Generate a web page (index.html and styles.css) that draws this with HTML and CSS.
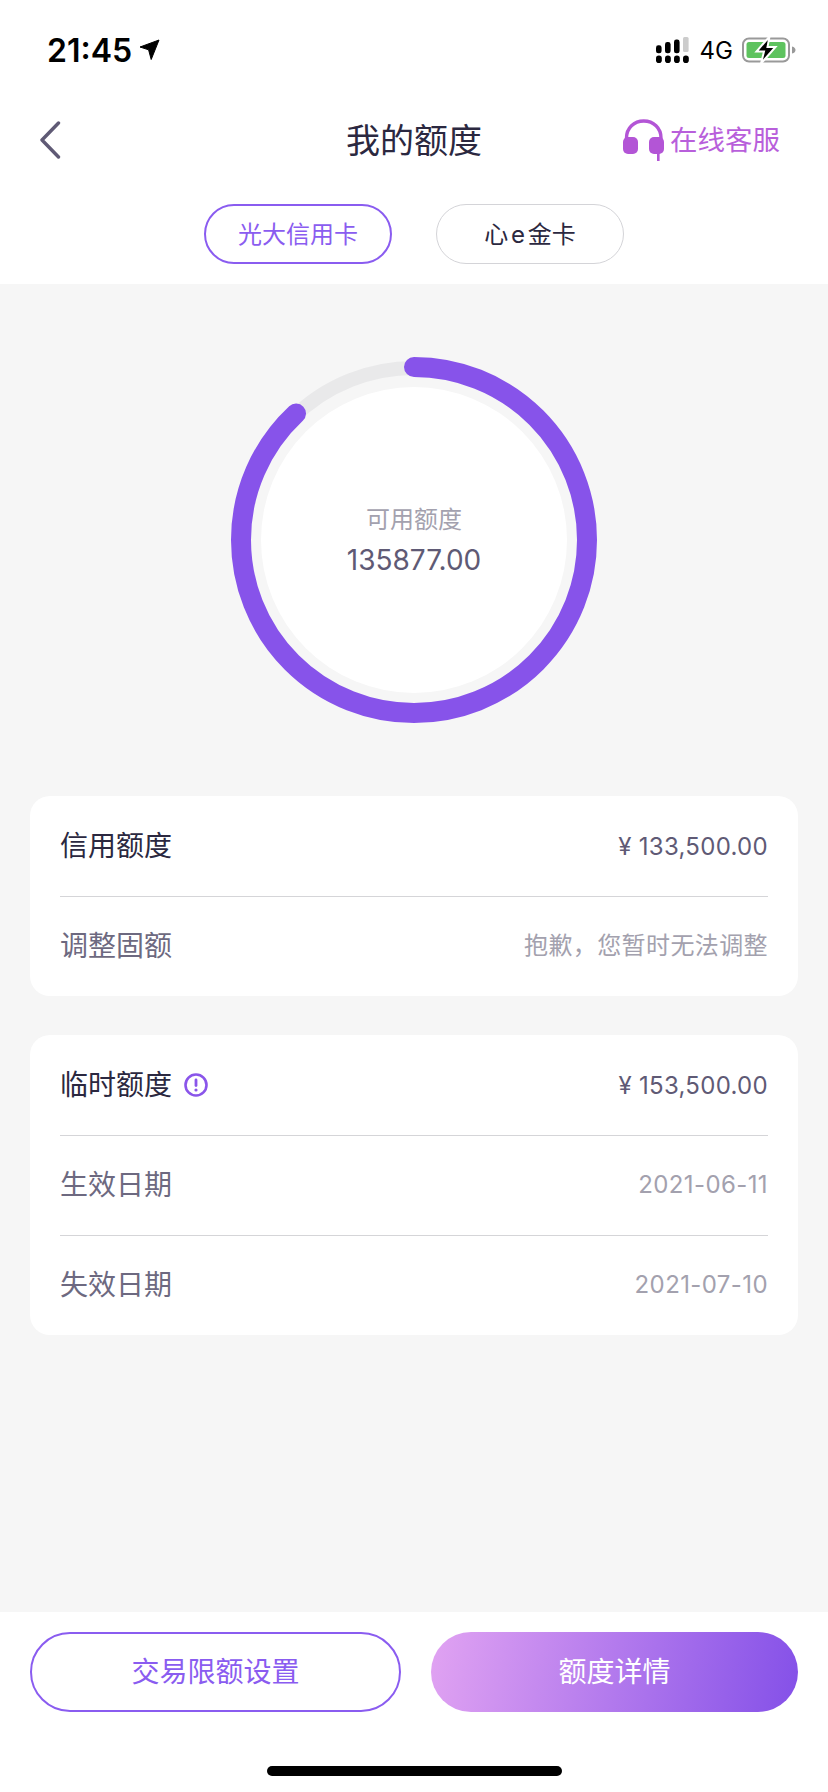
FILE: index.html
```html
<!DOCTYPE html>
<html lang="zh-CN">
<head>
    <meta charset="UTF-8">
    <meta name="viewport" content="width=device-width, initial-scale=1.0">
    <title>我的额度</title>
    <link rel="stylesheet" href="styles.css">
</head>
<body>
<div class="page">
    <div class="status">
        <div class="status-left">
            <span class="time">21:45</span>
            <svg class="arrow" width="21" height="22" viewBox="0 0 21 22"><path d="M1 8 L20 1 L12.2 20.5 L9.6 10.8 Z" fill="#000" stroke="#000" stroke-width="1" stroke-linejoin="round"/></svg>
        </div>
        <div class="status-right">
            <svg class="signal" width="33" height="26" viewBox="0 0 33 26">
                <rect x="0" y="8.3" width="5.6" height="8" rx="2.4" fill="#000"/>
                <rect x="9" y="5" width="5.6" height="11.3" rx="2.4" fill="#000"/>
                <rect x="18" y="2.5" width="5.6" height="13.8" rx="2.4" fill="#000"/>
                <rect x="27" y="0" width="5.6" height="15" rx="1.5" fill="#ccc"/>
                <rect x="0" y="18.6" width="5.8" height="7.4" rx="2.8" fill="#000"/>
                <rect x="9" y="18.6" width="5.8" height="7.4" rx="2.8" fill="#000"/>
                <rect x="18" y="18.6" width="5.8" height="7.4" rx="2.8" fill="#000"/>
                <rect x="27" y="18.6" width="5.8" height="7.4" rx="2.8" fill="#000"/>
            </svg>
            <span class="net">4G</span>
            <svg class="battery" width="54" height="28" viewBox="0 0 54 28">
                <rect x="1" y="2.5" width="46" height="23" rx="6" fill="none" stroke="#999" stroke-width="2"/>
                <rect x="4.5" y="6" width="39" height="16" rx="2.5" fill="#5ec35f"/>
                <path d="M50 10.5 C52.5 11 53.5 12.5 53.5 14 C53.5 15.5 52.5 17 50 17.5 Z" fill="#999"/>
                <path d="M27.5 0.5 L14.5 15.5 L22 15.5 L19 27.5 L33.5 11 L25.5 11 Z" fill="#000" stroke="#fff" stroke-width="2"/>
            </svg>
        </div>
    </div>

    <div class="nav">
        <svg class="back" width="22" height="38" viewBox="0 0 22 38"><path d="M19.5 2 L3 19 L19.5 36" fill="none" stroke="#5f5a75" stroke-width="3.4" stroke-linecap="round" stroke-linejoin="round"/></svg>
        <div class="title">我的额度</div>
        <div class="service">
            <svg class="headset" width="44" height="42" viewBox="0 0 44 42">
                <path d="M4.5 22 V19 C4.5 9 12 2 21.75 2 C31.5 2 39 9 39 19 V22" fill="none" stroke="#b355d6" stroke-width="3.4"/>
                <rect x="1" y="18" width="15" height="17" rx="5" fill="#b355d6"/>
                <rect x="27" y="18" width="15" height="17" rx="5" fill="#b355d6"/>
                <rect x="35" y="33" width="2.6" height="9" fill="#b355d6"/>
            </svg>
            <span class="service-text">在线客服</span>
        </div>
    </div>

    <div class="tabs">
        <div class="tab tab-active">光大信用卡</div>
        <div class="tab tab-tight">心 e 金卡</div>
    </div>

    <div class="main">
        <div class="ring-wrap">
            <svg class="ring" width="366" height="366" viewBox="0 0 366 366">
                <circle cx="183" cy="183" r="172" fill="none" stroke="#e9e9ea" stroke-width="14"/>
                <circle cx="183" cy="183" r="153" fill="#fff"/>
                <circle class="ring-bar" cx="183" cy="183" r="173" fill="none" stroke="#8753ea" stroke-width="20" stroke-linecap="round" pathLength="360" stroke-dasharray="317 360" transform="rotate(-90 183 183)"/>
            </svg>
            <div class="ring-text">
                <div class="ring-label">可用额度</div>
                <div class="ring-value">135877.00</div>
            </div>
        </div>

        <div class="card">
            <div class="row">
                <div class="label label-main">信用额度</div>
                <div class="value">¥ 133,500.00</div>
            </div>
            <div class="row">
                <div class="label">调整固额</div>
                <div class="value value-muted value-cn">抱歉，您暂时无法调整</div>
            </div>
        </div>

        <div class="card">
            <div class="row">
                <div class="label label-main">临时额度
                    <svg class="info" width="24" height="24" viewBox="0 0 24 24">
                        <circle cx="12" cy="12" r="10.5" fill="none" stroke="#8a55ea" stroke-width="2.6"/>
                        <rect x="10.6" y="5.6" width="2.8" height="8.4" rx="1.4" fill="#8a55ea"/>
                        <circle cx="12" cy="17" r="1.6" fill="#8a55ea"/>
                    </svg>
                </div>
                <div class="value">¥ 153,500.00</div>
            </div>
            <div class="row">
                <div class="label">生效日期</div>
                <div class="value value-muted">2021-06-11</div>
            </div>
            <div class="row">
                <div class="label">失效日期</div>
                <div class="value value-muted">2021-07-10</div>
            </div>
        </div>
    </div>

    <div class="footer">
        <div class="buttons">
            <div class="btn btn-line">交易限额设置</div>
            <div class="btn btn-fill">额度详情</div>
        </div>
        <div class="home-bar"></div>
    </div>
</div>
</body>
</html>
```

FILE: styles.css
```css
* {
    box-sizing: border-box;
}
body {
    margin: 0;
    background-color: #fff;
    font-family: Inter, "Noto Sans CJK SC", sans-serif;
}
.page {
    width: 828px;
    height: 1792px;
    display: flex;
    flex-direction: column;
    overflow: hidden;
}
.status {
    height: 98px;
    padding: 2px 32px 0 47px;
    display: flex;
    align-items: center;
    justify-content: space-between;
}
.status-left {
    display: flex;
    align-items: center;
    gap: 7px;
}
.time {
    font-size: 32px;
    font-weight: 600;
    color: #000;
}
.status-right {
    display: flex;
    align-items: center;
}
.net {
    font-size: 24px;
    margin: 0 9px 0 11px;
    color: #000;
}
.nav {
    height: 84px;
    padding: 0 48px 0 39px;
    display: flex;
    align-items: center;
    justify-content: space-between;
    position: relative;
}
.title {
    position: absolute;
    left: 0;
    right: 0;
    padding-bottom: 4px;
    text-align: center;
    font-size: 34px;
    color: #2b2840;
}
.service {
    display: flex;
    align-items: center;
    gap: 4px;
    font-size: 27.5px;
    color: #b85fdb;
}
.service-text {
    padding-bottom: 4px;
}
.tabs {
    margin: 22px 0 20px;
    display: flex;
    justify-content: center;
    gap: 44px;
}
.tab {
    width: 188px;
    height: 60px;
    padding-bottom: 3px;
    border: 1px solid #d4d4d8;
    border-radius: 30px;
    display: flex;
    align-items: center;
    justify-content: center;
    font-size: 24px;
    color: #2b2840;
}
.tab-active {
    border: 2px solid #8a5cf0;
    color: #8a5cf0;
}
.tab-tight {
    word-spacing: -4px;
}
.main {
    flex: 1;
    background-color: #f6f6f6;
    padding: 73px 30px 0;
}
.ring-wrap {
    width: 366px;
    height: 366px;
    margin: 0 auto 73px;
    display: grid;
    place-items: center;
}
.ring {
    grid-area: 1 / 1;
}
.ring-text {
    grid-area: 1 / 1;
    padding-top: 3px;
    text-align: center;
}
.ring-label {
    margin-bottom: 1px;
    font-size: 24px;
    line-height: 36px;
    color: #a3a1ae;
}
.ring-value {
    font-size: 28px;
    line-height: 42px;
    color: #5f5a75;
}
.card {
    background-color: #fff;
    border-radius: 20px;
    padding: 0 30px;
    margin-bottom: 39px;
}
.row {
    height: 100px;
    display: flex;
    align-items: center;
    justify-content: space-between;
    border-top: 1px solid #d5d5d8;
}
.row:first-child {
    border-top: 0;
}
.label {
    padding-bottom: 5px;
    display: flex;
    align-items: center;
    gap: 12px;
    font-size: 28px;
    color: #6d6980;
}
.label-main {
    color: #2b2840;
}
.info {
    margin-bottom: -5px;
}
.value {
    font-size: 24px;
    letter-spacing: 0.3px;
    color: #5f5a75;
}
.value-muted {
    padding-bottom: 2px;
    letter-spacing: 0.4px;
    color: #a3a1ae;
}
.value-cn {
    padding-bottom: 6px;
}
.footer {
    height: 180px;
    padding: 20px 30px 0;
}
.buttons {
    display: flex;
    gap: 30px;
}
.btn {
    flex: 1;
    height: 80px;
    padding-bottom: 4px;
    border-radius: 40px;
    display: flex;
    align-items: center;
    justify-content: center;
    font-size: 28px;
}
.btn-line {
    border: 2px solid #8a5cf0;
    color: #8a5cf0;
}
.btn-fill {
    background: linear-gradient(100deg, #e1a3f2, #8450e8);
    color: #fff;
}
.home-bar {
    width: 295px;
    height: 10px;
    margin: 54px auto 0;
    border-radius: 5px;
    background-color: #000;
}
```
